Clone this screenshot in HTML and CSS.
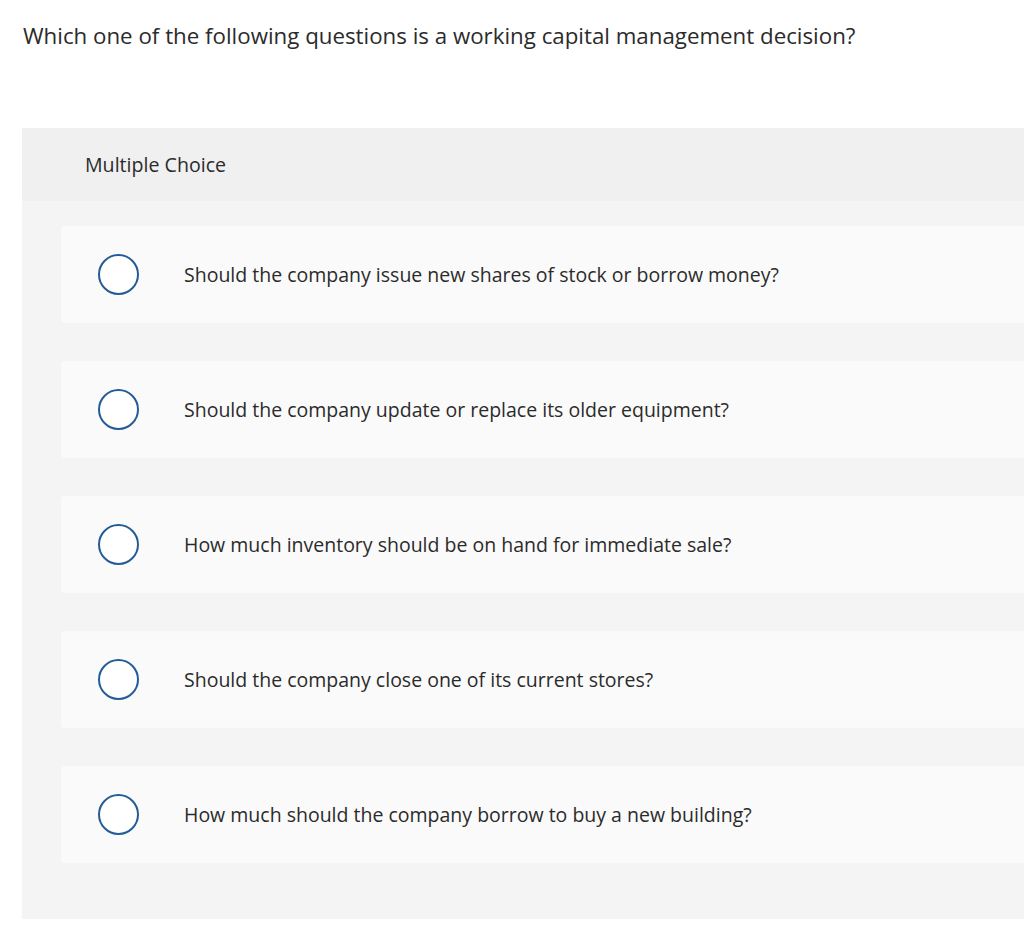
FILE: index.html
```html
<!DOCTYPE html>
<html lang="en">
<head>
<meta charset="utf-8">
<title>Multiple Choice</title>
<link rel="stylesheet" href="styles.css">
</head>
<body>
<main class="page">
  <p class="question">Which one of the following questions is a working capital management decision?</p>
  <section class="panel">
    <div class="panel-header">Multiple Choice</div>
    <div class="options">
      <label class="option"><span class="radio"></span><span class="option-text">Should the company issue new shares of stock or borrow money?</span></label>
      <label class="option"><span class="radio"></span><span class="option-text">Should the company update or replace its older equipment?</span></label>
      <label class="option"><span class="radio"></span><span class="option-text">How much inventory should be on hand for immediate sale?</span></label>
      <label class="option"><span class="radio"></span><span class="option-text">Should the company close one of its current stores?</span></label>
      <label class="option"><span class="radio"></span><span class="option-text">How much should the company borrow to buy a new building?</span></label>
    </div>
  </section>
</main>
</body>
</html>
```
FILE: styles.css
```css
html, body {
  margin: 0;
  padding: 0;
  background: #ffffff;
  overflow: hidden;
}
body {
  font-family: "Open Sans", "Lato", sans-serif;
  color: #2b2b2b;
}
.page {
  padding: 0 0 0 22px;
}
.question {
  margin: 0;
  padding: 22px 0 0 1px;
  font-size: 22.3px;
  line-height: 28px;
  height: 128px;
  box-sizing: border-box;
  white-space: nowrap;
}
.panel {
  width: 1040px;
  background: #f4f4f4;
  padding-bottom: 56px;
}
.panel-header {
  background: #f0f0f0;
  height: 73px;
  box-sizing: border-box;
  display: flex;
  align-items: center;
  padding-left: 63px;
  font-size: 19.6px;
  line-height: 24px;
}
.options {
  padding: 25px 0 0 39px;
  display: flex;
  flex-direction: column;
  gap: 38px;
}
.option {
  display: flex;
  align-items: center;
  height: 97px;
  background: #fafafa;
  border-radius: 4px 0 0 4px;
  padding-left: 37px;
  box-sizing: border-box;
}
.radio {
  width: 41px;
  height: 41px;
  box-sizing: border-box;
  border: 2px solid #245c98;
  border-radius: 50%;
  background: #ffffff;
  flex: none;
}
.option-text {
  margin-left: 45px;
  font-size: 19.5px;
  line-height: 24px;
  white-space: nowrap;
}
```
